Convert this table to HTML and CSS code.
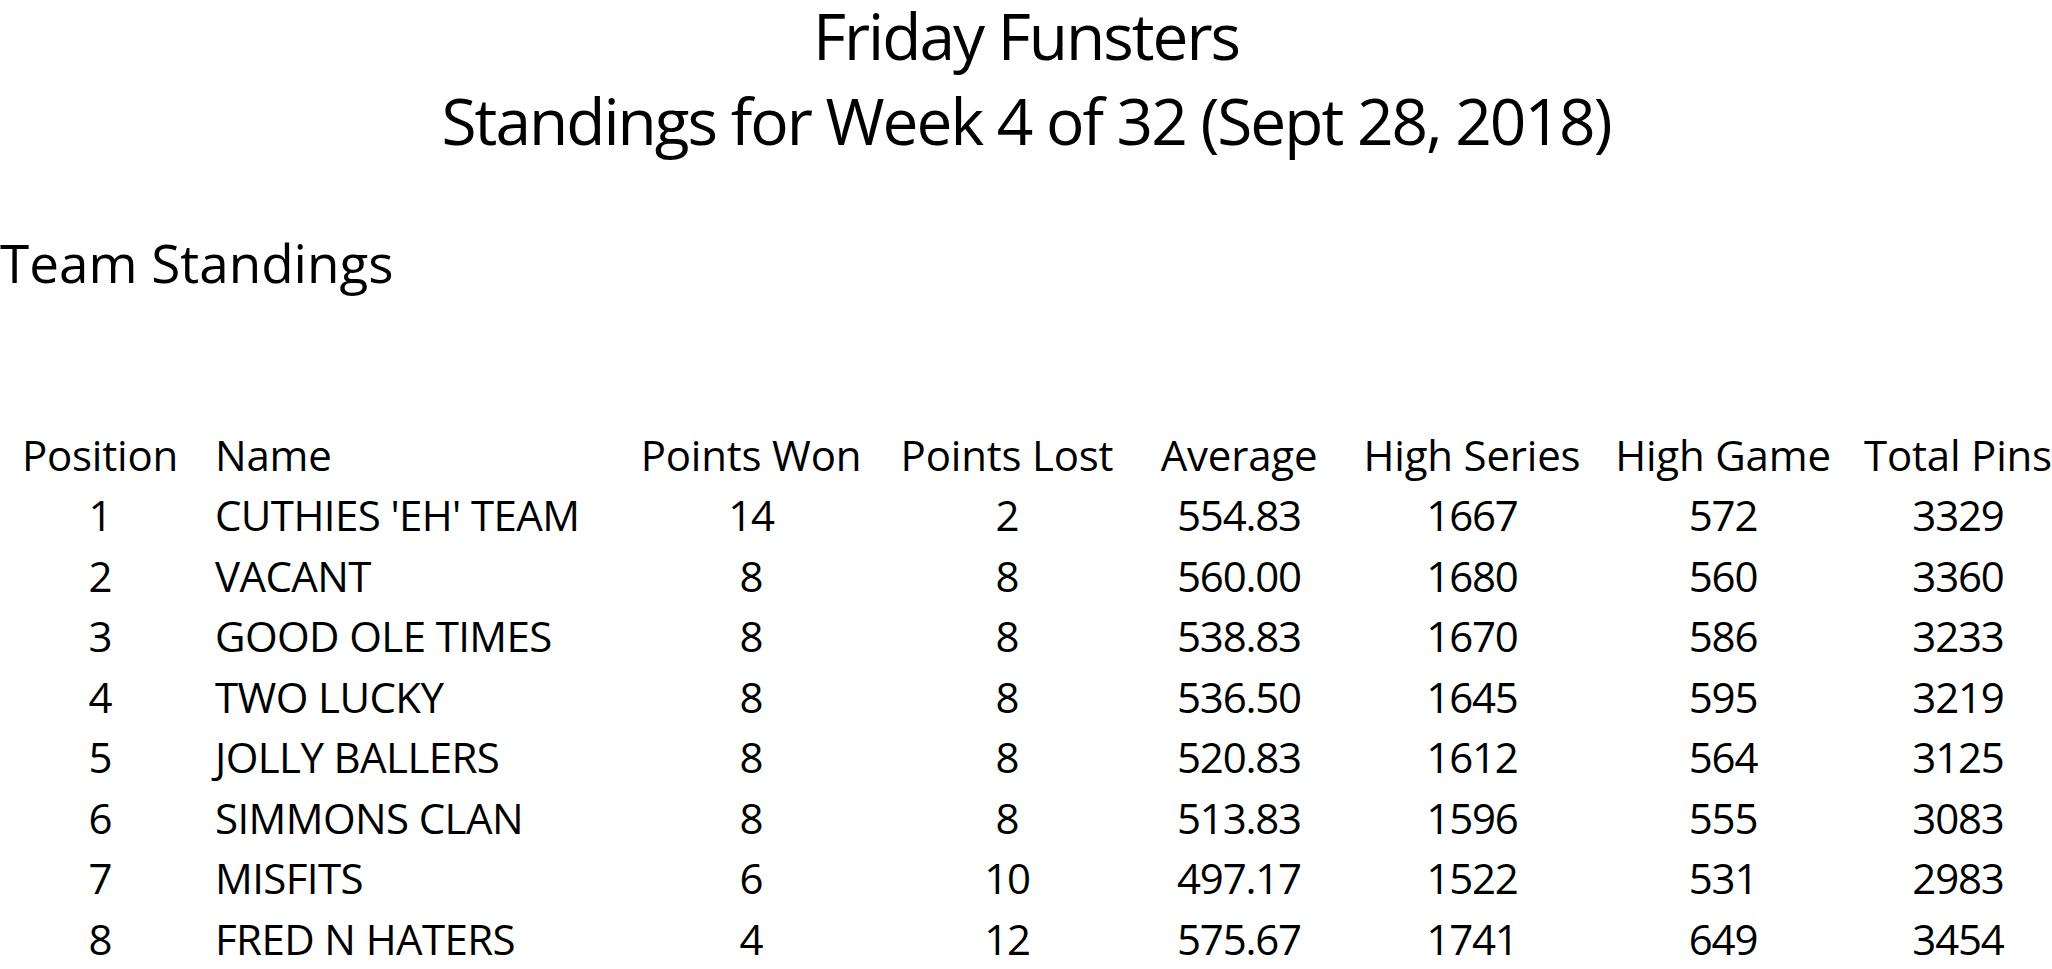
FILE: index.html
```html
<!DOCTYPE html>
<html>
<head>
<meta charset="utf-8">
<link rel="stylesheet" href="styles.css">
</head>
<body>
<header class="titles">
  <h1 class="title title-main">Friday Funsters</h1>
  <h1 class="title title-sub">Standings for Week 4 of 32 (Sept 28, 2018)</h1>
</header>
<h2 class="section">Team Standings</h2>
<table class="standings">
  <colgroup>
    <col class="c-pos"><col class="c-name"><col class="c-won"><col class="c-lost"><col class="c-avg"><col class="c-hs"><col class="c-hg"><col class="c-tp">
  </colgroup>
  <thead>
    <tr class="head-row">
      <th>Position</th><th class="name">Name</th><th>Points Won</th><th>Points Lost</th><th>Average</th><th>High Series</th><th>High Game</th><th>Total Pins</th>
    </tr>
  </thead>
  <tbody>
    <tr><td>1</td><td class="name">CUTHIES 'EH' TEAM</td><td>14</td><td>2</td><td>554.83</td><td>1667</td><td>572</td><td>3329</td></tr>
    <tr><td>2</td><td class="name">VACANT</td><td>8</td><td>8</td><td>560.00</td><td>1680</td><td>560</td><td>3360</td></tr>
    <tr><td>3</td><td class="name">GOOD OLE TIMES</td><td>8</td><td>8</td><td>538.83</td><td>1670</td><td>586</td><td>3233</td></tr>
    <tr><td>4</td><td class="name">TWO LUCKY</td><td>8</td><td>8</td><td>536.50</td><td>1645</td><td>595</td><td>3219</td></tr>
    <tr><td>5</td><td class="name">JOLLY BALLERS</td><td>8</td><td>8</td><td>520.83</td><td>1612</td><td>564</td><td>3125</td></tr>
    <tr><td>6</td><td class="name">SIMMONS CLAN</td><td>8</td><td>8</td><td>513.83</td><td>1596</td><td>555</td><td>3083</td></tr>
    <tr><td>7</td><td class="name">MISFITS</td><td>6</td><td>10</td><td>497.17</td><td>1522</td><td>531</td><td>2983</td></tr>
    <tr><td>8</td><td class="name">FRED N HATERS</td><td>4</td><td>12</td><td>575.67</td><td>1741</td><td>649</td><td>3454</td></tr>
  </tbody>
</table>
</body>
</html>
```

FILE: styles.css
```css
html, body {
  margin: 0;
  padding: 0;
  background: #ffffff;
  overflow: hidden;
}
body {
  font-family: "Open Sans", "Noto Sans", sans-serif;
  color: #000000;
}
.titles {
  text-align: center;
}
.title {
  margin: 0;
  font-size: 64px;
  font-weight: normal;
  letter-spacing: -2px;
}
.title-main {
  line-height: 72.4px;
}
.title-sub {
  line-height: 97.6px;
}
.section {
  margin: 63px 0 0 0;
  font-size: 53px;
  font-weight: normal;
  line-height: 60px;
  letter-spacing: 0;
}
.standings {
  margin-top: 131px;
  width: 2078px;
  table-layout: fixed;
  border-collapse: collapse;
  font-size: 42px;
  letter-spacing: -1.2px;
}
.c-pos { width: 200px; }
.c-name { width: 430px; }
.c-won { width: 242px; }
.c-lost { width: 270px; }
.c-avg { width: 194px; }
.c-hs { width: 272px; }
.c-hg { width: 230px; }
.c-tp { width: 240px; }
.standings th,
.standings td {
  padding: 0;
  text-align: center;
  font-weight: normal;
  white-space: nowrap;
  line-height: 60.5px;
  height: 60.5px;
}
.standings .head-row th {
  height: 61px;
  line-height: 61px;
  letter-spacing: -0.2px;
}
.standings td.name {
  letter-spacing: -0.6px;
}
.standings .name {
  text-align: left;
  padding-left: 15px;
}
```
